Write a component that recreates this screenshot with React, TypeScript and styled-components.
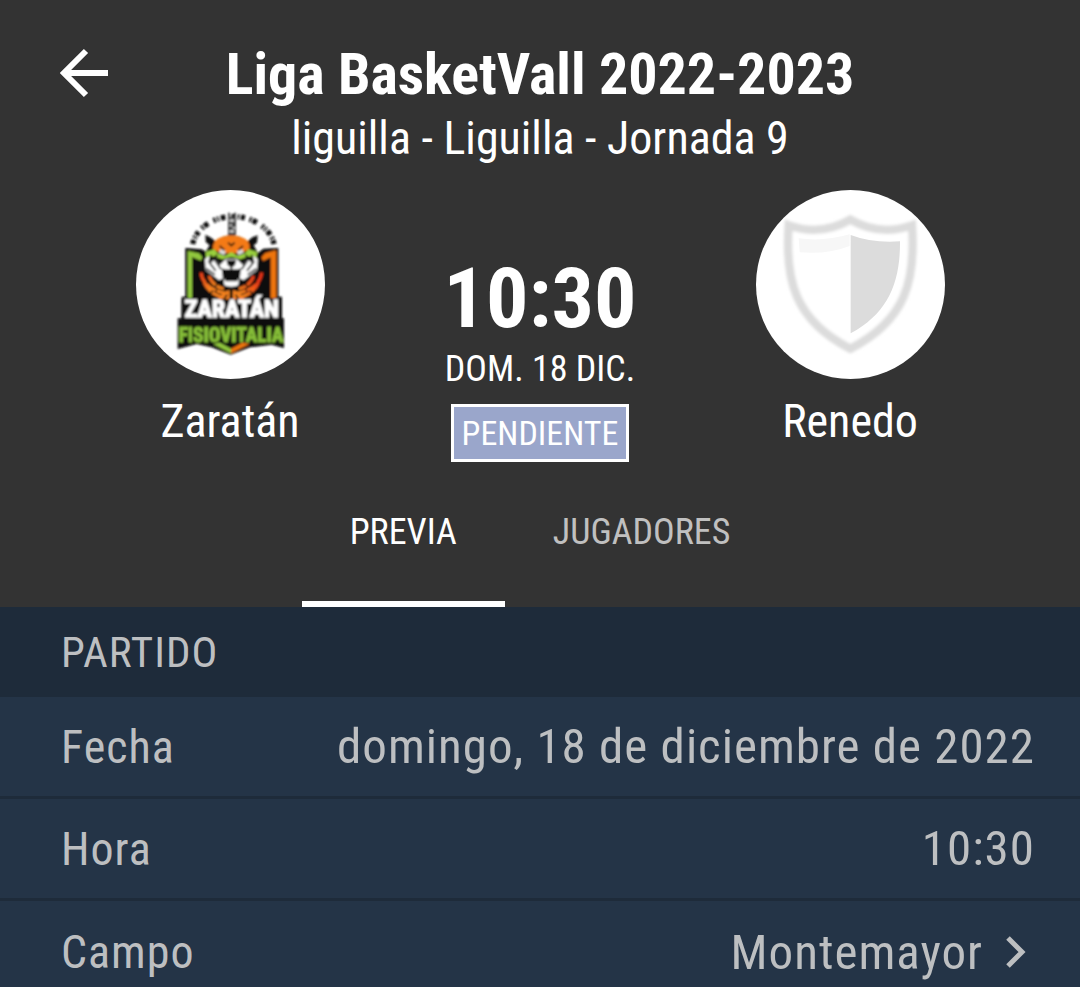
import React from 'react';
import styled, { createGlobalStyle } from 'styled-components';

const GlobalStyle = createGlobalStyle`
  *, *::before, *::after { box-sizing: border-box; }
  body {
    margin: 0;
    background: #243447;
    color: #fff;
    font-family: "Roboto Condensed", Roboto, "Liberation Sans", sans-serif;
  }
`;

const Header = styled.header`
  background: #333;
  padding-top: 40px;
`;

const TopBar = styled.div`
  display: grid;
  grid-template-columns: 64px 1fr 64px;
  padding: 0 52px;
`;

const BackButton = styled.button`
  display: grid;
  place-items: center;
  width: 64px;
  height: 66px;
  padding: 0;
  border: 0;
  background: none;
  color: inherit;
`;

const Heading = styled.div`
  text-align: center;
  white-space: nowrap;
`;

const Title = styled.h1`
  margin: 0;
  font-size: 58px;
  line-height: 68px;
  font-weight: 700;
`;

const Subtitle = styled.p`
  margin: 0;
  font-size: 46px;
  line-height: 60px;
`;

const Scoreboard = styled.div`
  display: grid;
  grid-template-columns: repeat(3, 1fr);
  padding: 22px 75px 0;
`;

const Team = styled.div`
  display: flex;
  flex-direction: column;
  align-items: center;
  gap: 12px;
`;

const Crest = styled.div`
  width: 189px;
  height: 189px;
  border-radius: 50%;
  background: #fff;
  overflow: hidden;

  svg { display: block; width: 100%; height: 100%; }
`;

const TeamName = styled.span`
  font-size: 46px;
  line-height: 60px;
`;

const Kickoff = styled.div`
  display: flex;
  flex-direction: column;
  align-items: center;
  padding-top: 62px;
  white-space: nowrap;
`;

const Time = styled.strong`
  font-size: 84px;
  line-height: 94px;
  font-weight: 700;
`;

const Day = styled.span`
  font-size: 36px;
  line-height: 46px;
`;

const Status = styled.span`
  margin-top: 12px;
  padding: 0 8px;
  border: 3px solid #fff;
  background: #9aa6cb;
  font-size: 34px;
  line-height: 52px;
`;

const Tabs = styled.nav`
  display: flex;
  justify-content: center;
  padding-top: 28px;
`;

const Tab = styled.button<{ $active?: boolean }>`
  height: 117px;
  padding: 0 48px 28px;
  border: 0;
  border-bottom: 6px solid ${p => (p.$active ? '#fff' : 'transparent')};
  background: none;
  color: ${p => (p.$active ? '#fff' : '#c0c0c0')};
  font: inherit;
  font-size: 36px;
`;

const SectionTitle = styled.h2`
  margin: 0;
  padding: 0 61px;
  background: #1e2b3a;
  color: #bdbfc1;
  font-size: 43px;
  line-height: 90px;
  font-weight: 400;
  letter-spacing: 1px;
`;

const Details = styled.dl`
  margin: 0;
  color: #bdbfc1;
  letter-spacing: 1px;
`;

const Row = styled.div`
  display: flex;
  justify-content: space-between;
  align-items: center;
  height: 102px;
  padding: 0 45px 0 61px;
  border-bottom: 3px solid #1e2b3a;

  &:last-child { border-bottom: 0; }
`;

const Label = styled.dt`
  font-size: 46px;
`;

const Value = styled.dd`
  margin: 0;
  font-size: 49px;
`;

const PlaceLink = styled.a`
  display: flex;
  align-items: center;
  gap: 22px;
  padding-right: 8px;
  color: inherit;
  text-decoration: none;
`;

function TigerCrest() {
  return (
    <svg viewBox="18 30 567 567" role="img" aria-label="Zaratán">
      <defs>
        <filter id="soft"><feGaussianBlur stdDeviation="2.4" /></filter>
        <linearGradient id="stripe" x1="0" x2="1" y1="0" y2="1">
          <stop offset="0" stopColor="#f03c14" />
          <stop offset="0.5" stopColor="#f58220" />
        </linearGradient>
        <linearGradient id="stripeRight" x1="1" x2="0" y1="0" y2="1">
          <stop offset="0.2" stopColor="#ee3412" />
          <stop offset="0.8" stopColor="#f58220" />
        </linearGradient>
      </defs>
      <g filter="url(#soft)">
        <path d="M188 192A124 100 0 0 1 432 192" fill="none" stroke="#111" strokeWidth="16" strokeDasharray="13 6 5 5 12 14 6 4 14 18 7 5 5 6 14 8 6 4" />
        <path d="M294 98H300V112H312V98H318V165H294Z" fill="#444" />
        <path d="M298 122H312M299 136H305M308 144H315M298 154H312" stroke="#eee" strokeWidth="5" />
        <path d="M166 204L215 208L240 222H380L400 206L445 204V350H456V415H462V504L425 494L360 502L302 524L245 502L200 492L143 507V415H155V350H166Z" fill="#080808" />
        <path d="M174 213L207 220L217 231L213 242L186 231V354H174Z" fill="#91c83e" />
        <path d="M438 211L406 219L394 232L399 243L422 232V354H438Z" fill="#ee7410" />
        <g transform="translate(165 180)">
          <path d="M61 -16L76 -8L92 4Q138 -34 188 4L202 -8L218 -14L216 8L206 16L224 48L220 94L178 136H100L58 94L54 48L74 16L62 6Z" fill="#111" />
          <path d="M84 28Q82 -2 110 -9Q139 -19 168 -9Q196 -2 194 28L168 40H110Z" fill="#f47a16" />
          <path d="M104 18L116 28L114 42M174 18L162 28L164 42M129 8L139 17L149 8" fill="none" stroke="#111" strokeWidth="5" />
          <path d="M106 28L122 34L118 46L102 38ZM172 28L156 34L160 46L176 38Z" fill="#ddd" />
          <path d="M62 36L88 28L98 40L120 48L139 36L158 48L180 40L190 28L216 36L214 56L192 48L166 58L139 50L112 58L86 48L64 56Z" fill="#9ad13d" />
          <path d="M60 58L72 48L78 70L90 56L104 76L122 58H156L174 76L188 56L200 70L206 48L218 58L216 90L176 120L160 114L164 88H114L118 114L102 120L62 90Z" fill="#fff" />
          <path d="M124 61H154L150 76L139 84L128 76Z" fill="#111" />
          <path d="M139 80V92M78 44L72 66L92 92M96 44L88 58L108 88M200 44L206 66L186 92M182 44L190 58L170 88M64 86L90 104M214 86L188 104" fill="none" stroke="#111" strokeWidth="5" />
          <path d="M110 84L128 92L139 88L150 92L168 84L164 120H114Z" fill="#080808" />
          <path d="M116 114L122 124H156L162 114L160 136Q139 144 118 136Z" fill="#fff" />
          <path d="M48 98Q54 146 122 160M58 128Q72 162 120 174M72 108Q84 140 116 146" fill="none" stroke="url(#stripe)" strokeWidth="9" strokeDasharray="34 4" />
          <path d="M230 98Q224 146 156 160M220 128Q206 162 158 174M206 108Q194 140 162 146" fill="none" stroke="url(#stripeRight)" strokeWidth="9" strokeDasharray="34 4" />
          <path d="M96 180L118 156L134 150V180ZM144 180V150L160 156L182 180Z" fill="#f58220" />
          <path d="M116 180L126 164M162 180L152 164" stroke="#111" strokeWidth="5" />
        </g>
        <path d="M155 358H456V420H155Z" fill="#080808" />
        <path d="M248 491L270 488L303 506V520Z" fill="#91c83e" />
        <path d="M303 520V506L337 488L360 491Z" fill="#ee7410" />
        <text x="305" y="412" textAnchor="middle" fill="#fff" stroke="#fff" strokeWidth="4" fontFamily="Roboto Condensed, Roboto, sans-serif" fontWeight="700" fontSize="72">ZARATÁN</text>
        <text x="303" y="486" textAnchor="middle" fill="#85bd38" stroke="#85bd38" strokeWidth="3" fontFamily="Roboto Condensed, Roboto, sans-serif" fontWeight="700" fontSize="58">FISIOVITALIA</text>
      </g>
    </svg>
  );
}

function ShieldCrest() {
  return (
    <svg viewBox="15 30 567 567" role="img" aria-label="Renedo">
      <defs>
        <filter id="haze"><feGaussianBlur stdDeviation="4" /></filter>
      </defs>
      <path d="M113 136Q210 170 298 119Q386 170 483 136C494 300 466 420 298 506C130 420 102 300 113 136Z" fill="#fff" stroke="#dcdcdc" strokeWidth="25" filter="url(#haze)" />
      <path d="M143 175Q220 185 296 163V198Q230 224 146 217Z" fill="#f7f7f7" />
      <path d="M299 165Q365 190 447 184C448 310 410 400 299 460Z" fill="#dcdcdc" />
    </svg>
  );
}

export default function App() {
  return (
    <>
      <GlobalStyle />
      <Header>
        <TopBar>
          <BackButton aria-label="Volver">
            <svg width="50" height="50" viewBox="0 0 50 50" fill="none" stroke="currentColor" strokeWidth="6">
              <path d="M49 25H5M27 3L5 25L27 47" />
            </svg>
          </BackButton>
          <Heading>
            <Title>Liga BasketVall 2022-2023</Title>
            <Subtitle>liguilla - Liguilla - Jornada 9</Subtitle>
          </Heading>
        </TopBar>
        <Scoreboard>
          <Team>
            <Crest><TigerCrest /></Crest>
            <TeamName>Zaratán</TeamName>
          </Team>
          <Kickoff>
            <Time>10:30</Time>
            <Day>DOM. 18 DIC.</Day>
            <Status>PENDIENTE</Status>
          </Kickoff>
          <Team>
            <Crest><ShieldCrest /></Crest>
            <TeamName>Renedo</TeamName>
          </Team>
        </Scoreboard>
        <Tabs>
          <Tab $active>PREVIA</Tab>
          <Tab>JUGADORES</Tab>
        </Tabs>
      </Header>
      <main>
        <SectionTitle>PARTIDO</SectionTitle>
        <Details>
          <Row>
            <Label>Fecha</Label>
            <Value>domingo, 18 de diciembre de 2022</Value>
          </Row>
          <Row>
            <Label>Hora</Label>
            <Value>10:30</Value>
          </Row>
          <Row>
            <Label>Campo</Label>
            <Value>
              <PlaceLink href="#campo">
                Montemayor
                <svg width="22" height="34" viewBox="0 0 22 34" fill="none" stroke="currentColor" strokeWidth="5">
                  <path d="M3 3L17 17L3 31" />
                </svg>
              </PlaceLink>
            </Value>
          </Row>
        </Details>
      </main>
    </>
  );
}
